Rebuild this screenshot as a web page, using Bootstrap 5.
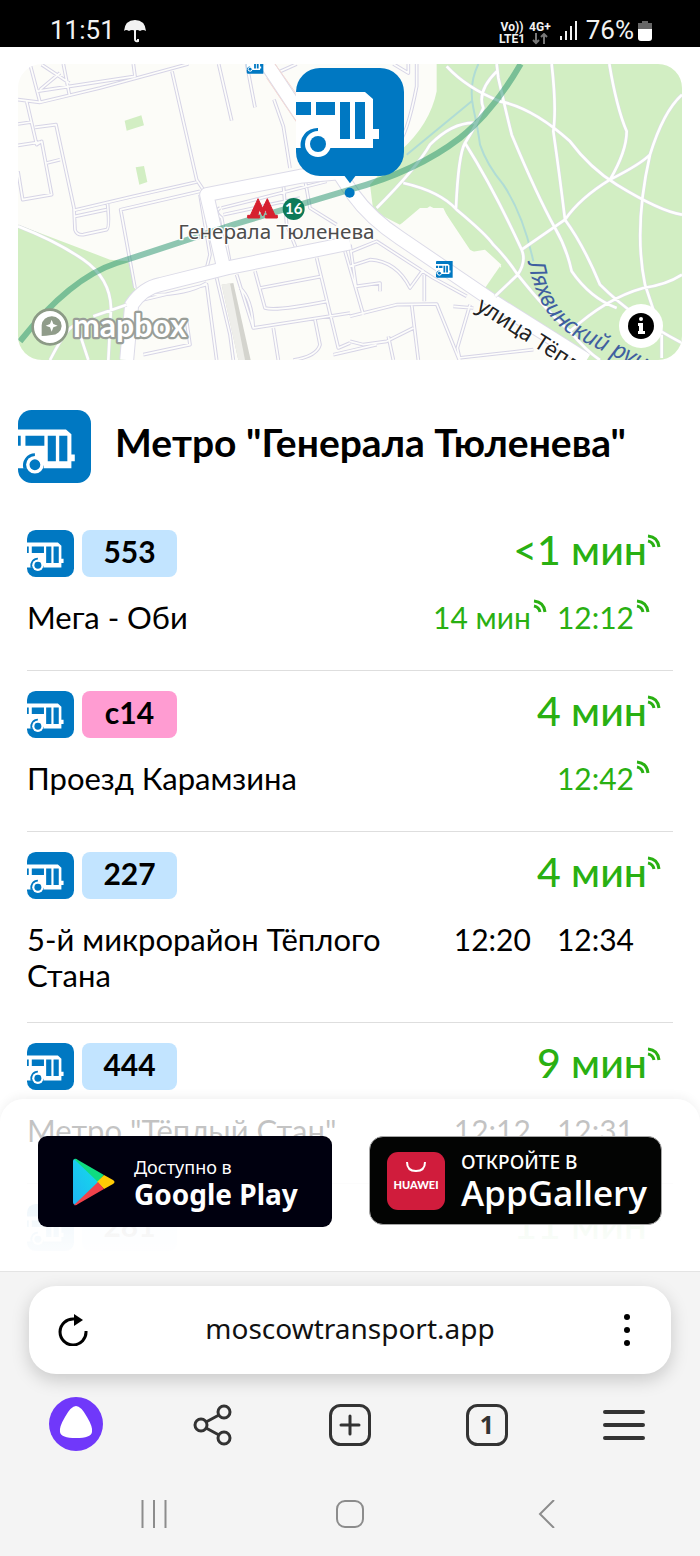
<!DOCTYPE html>
<html lang="ru">
<head>
    <meta charset="UTF-8">
    <meta name="viewport" content="width=device-width, initial-scale=1.0">
    <title>Метро "Генерала Тюленева"</title>
    <!-- Bootstrap CSS -->
    <link href="https://cdn.jsdelivr.net/npm/bootstrap@5.3.0/dist/css/bootstrap.min.css" rel="stylesheet">
    <style>
        body { font-family: "Lato", "Open Sans", sans-serif; color: #000; background: #fff; }
        svg { display: block; flex: none; }
        .phone-status { height: 48px; padding: 13px 48px 0 50px; font: 26px/34px "Roboto", sans-serif; color: #f2f2f2; }
        .net-info { font-size: 12px; line-height: 12px; font-weight: 700; }
        .page-scroll { overflow-y: auto; scrollbar-width: none; }
        .page-scroll::-webkit-scrollbar { display: none; }
        .map-box { margin: 17px 18px 0; border-radius: 24px; overflow: hidden; }
        .map-box > svg { width: 100%; height: 296px; }
        .info-btn { right: 19px; bottom: 12px; width: 44px; height: 44px; border: 0; border-radius: 50%; background: #fff; padding: 8px; }
        .stop-head { margin: 50px 18px 27px; gap: 24px; }
        .stop-head h1 { font-size: 39px; line-height: 44px; font-weight: 700; margin: 0 0 10px; }
        .route-list { margin: 0 27px; }
        .route-list .list-group-item { padding: 20px 0 29px; border-color: #dedede; color: #000; background: none; min-height: 161px; }
        .route-num { width: 95px; height: 47px; border-radius: 8px; background: #c2e4ff; font-size: 30px; line-height: 43px; font-weight: 700; text-align: center; }
        .route-num.night { background: #ff9cd2; }
        .next-time { font-size: 41px; line-height: 40px; font-weight: 500; padding-right: 12px; }
        .live { color: #29b012; }
        .route-way { margin-top: 22px; font-size: 31px; line-height: 36px; }
        .route-to { max-width: 380px; }
        .later { gap: 10px; padding-right: 23px; font-size: 30px; }
        .later span { padding-right: 16px; }
        .later .live { padding-right: 0; gap: 2px; }
        .promo { border-radius: 24px 24px 0 0; padding: 37px 38px 44px; gap: 37px; height: 172px; background: linear-gradient(rgba(255,255,255,.74), rgba(255,255,255,.78) 25%, rgba(255,255,255,.93) 55%, rgba(255,255,255,.96) 75%, #fff); box-shadow: 0 -3px 10px rgba(0,0,0,.05); }
        .store { flex: 0 1 50%; min-width: 0; border-radius: 9px; color: #fff; text-decoration: none; font-family: "Noto Sans", sans-serif; white-space: nowrap; }
        .store:hover { color: #fff; }
        .gplay { background: #00000f; padding-left: 34px; gap: 18px; }
        .gplay small { font-size: 18px; line-height: 24px; }
        .gplay b { font-size: 28px; line-height: 30px; }
        .huawei { background: #030403; border: 1px solid #a6a6a6; border-radius: 14px; padding-left: 17px; gap: 16px; margin-bottom: 2px; }
        .huawei small { font-size: 19px; line-height: 24px; font-weight: 500; }
        .huawei b { font-family: "Open Sans", sans-serif; font-size: 35px; line-height: 38px; font-weight: 600; }
        .browser-bar { background: #f4f4f4; border-top: 1px solid #e4e4e4; padding-top: 14px; }
        .address { height: 88px; margin: 0 29px 22px; padding: 0 28px; border-radius: 27px; background: #fff; box-shadow: 0 6px 18px rgba(0,0,0,.18); }
        .address input { border: 0; outline: 0; background: none; min-width: 0; text-align: center; font: 28px/36px "Noto Sans", sans-serif; color: #111; padding: 0 0 4px; }
        .bare { border: 0; background: none; padding: 0; }
        .tools { padding: 0 8px; height: 57px; }
        .sys-nav { padding: 18px 56px 0; height: 103px; }
    </style>
</head>
<body>
    <!-- Общие значки -->
    <svg width="0" height="0" class="position-absolute" aria-hidden="true">
        <symbol id="bus" viewBox="0 0 108 108">
            <rect width="108" height="108" rx="24" fill="#0078c2"/>
            <path d="M0 24H69L77 31V61H83V71H77V80H0Z" fill="#fff"/>
            <path d="M0 34H15V47H0ZM20 34H39V47H20ZM44 34H54V71H44ZM59 34H69V71H59Z" fill="#0078c2"/>
            <path d="M5 81A17 17 0 0 1 22 60V76H34V81Z" fill="#0078c2"/>
            <circle cx="22" cy="76" r="13" fill="#fff"/>
            <circle cx="22" cy="76" r="8" fill="#0078c2"/>
        </symbol>
        <symbol id="bus-list" viewBox="0 0 108 108">
            <rect width="108" height="108" rx="20" fill="#0078c2"/>
            <path d="M0 29H71L79 36V66H84V76H79V86H0Z" fill="#fff"/>
            <path d="M0 38H4V53H0ZM11 38H39V53H11ZM44 38H56V76H44ZM61 38H73V76H61Z" fill="#0078c2"/>
            <path d="M8 87A18 18 0 0 1 25 64V82H38V87Z" fill="#0078c2"/>
            <circle cx="25" cy="81" r="13" fill="#fff"/>
            <circle cx="25" cy="81" r="8" fill="#0078c2"/>
        </symbol>
        <symbol id="wave" viewBox="0 0 14 14">
            <g fill="none" stroke="#29b012" stroke-width="3">
                <path d="M1 2Q11 3 12 13"/>
                <path d="M1 7Q6 8 7 13" />
            </g>
        </symbol>
    </svg>

    <div class="d-flex flex-column vh-100">
        <div class="phone-status bg-black d-flex justify-content-between">
            <div class="d-flex gap-2">
                <span>11:51</span>
                <svg class="mt-1" width="24" height="28" viewBox="0 0 24 28"><path d="M1 14Q2 3 12 3T23 14Q20 12 17 14Q14 12 12 14Q9 12 6 14Q3 12 1 14Z" fill="#f2f2f2"/><path d="M12 13V22Q12 25 15 24V22" fill="none" stroke="#f2f2f2" stroke-width="2"/></svg>
            </div>
            <div class="d-flex">
                <div class="net-info text-center mt-1 pt-1 me-1">Vo))<br>LTE1</div>
                <div class="net-info text-center mt-1 pt-1 me-2">4G+<br><svg class="mx-auto" width="16" height="12" viewBox="0 0 16 12"><path d="M4 0V10M1 7L4 10L7 7M12 11V1M9 4L12 1L15 4" fill="none" stroke="#777" stroke-width="2"/></svg></div>
                <svg class="me-2" width="19" height="34" viewBox="0 0 19 34"><path d="M2 23V27M7 18V27M12 13V27M17 8V27" stroke="#f2f2f2" stroke-width="2"/></svg>
                <span>76%</span>
                <svg class="ms-1" width="14" height="34" viewBox="0 0 14 34"><path d="M4 8H10V10H14V18H0V10H4Z" fill="#666"/><path d="M0 16H14V25Q14 28 11 28H3Q0 28 0 25Z" fill="#fff"/></svg>
            </div>
        </div>

        <div class="flex-grow-1 position-relative overflow-hidden">
            <main class="page-scroll h-100">
                <!-- Карта -->
                <div class="map-box position-relative">
                    <svg viewBox="54 48 1992 888" preserveAspectRatio="xMidYMid slice" role="img" aria-label="Карта">
                        <defs>
                            <path id="river-line" d="M1584 642C1600 730 1640 820 1720 865S1850 925 2000 1005"/>
                            <path id="street-line" d="M1426 784L1920 1100"/>
                            <path id="lanes" d="M54 155L120 163L300 120L565 48M90 48L120 163M190 48L208 140M110 130L405 85L400 48M125 50L208 105M180 75L120 125M80 160L110 290L125 280L155 440L68 455L54 370M54 228L95 222M54 292L120 282M105 238L168 230L222 480L225 545Q230 562 250 560L320 545Q330 540 322 462M140 345L180 335M222 487L400 445L590 402M225 505L320 485M516 70L590 395L610 425M656 48L695 218M740 48L765 178M822 155L850 235L870 360M830 75L890 48M600 430L362 485L405 720M600 440L630 620L620 660M660 480Q640 490 665 510L690 645M665 480L980 400M670 500L900 450M850 410L860 530L890 605M915 395L930 480L1010 530M410 760L620 710L650 936M650 690L690 860L700 936M765 670L795 780Q830 790 980 760M780 720L965 685M710 680L760 840L1050 795M720 720Q755 750 760 840M950 630L1015 900L1050 885M820 840L835 936M945 815L960 890Q950 925 880 936M430 920L570 890L560 820M460 740Q560 740 620 705M1035 610L1090 800M1000 920L1130 890M1050 590L1068 715L1140 705V730M1050 655L1110 635Q1190 640 1230 720L1270 665M1050 612L1130 580L1300 690L1400 745M1273 680V760M1050 805L1190 770L1310 768L1378 936M1235 770L1255 936M1410 770L1372 900L1380 936M1360 775L1420 780M1050 880L1090 890L1160 880L1240 840M1165 865L1180 936M1375 930L1600 905M1180 48L1225 75V48M1250 48V115Q1220 270 1190 290"/>
                            <path id="trails" d="M1340 55Q1400 120 1500 160Q1600 180 1710 280Q1770 360 1850 410Q1980 490 2046 500M1490 48L1495 90Q1520 200 1535 260Q1610 440 1665 540Q1700 600 1715 670Q1770 750 1850 780M1490 70Q1430 130 1450 180Q1430 230 1395 285Q1375 320 1368 480M1130 480Q1250 360 1290 290Q1360 220 1430 225M1395 285Q1480 420 1565 605Q1580 640 1553 680L1485 745M1210 405Q1320 430 1370 485Q1460 560 1480 590Q1520 630 1553 680Q1640 790 1710 850Q1760 910 1800 936M1565 605L1695 515Q1740 450 1830 395Q1920 350 1950 320Q1990 190 2046 140M1655 48Q1670 180 1660 250Q1680 390 1695 515Q1750 590 1800 710Q1900 810 2046 885M1828 48Q1850 180 1880 250Q1880 310 1830 395M1950 320Q1900 540 1935 710L1975 830M1710 850Q1820 750 1930 720Q2000 710 2046 680M1985 930L1985 860M54 535Q170 580 250 635Q330 690 333 780L325 936M280 805L380 770M150 936Q230 780 240 860L265 936"/>
                            <path id="streets" d="M380 936L395 770Q430 720 480 710L680 660L1050 585M670 655L620 440L900 385L1010 375M800 48L1060 440Q1110 510 1200 570L1480 760L1760 936"/>
                        </defs>
                        <rect x="54" y="48" width="1992" height="888" fill="#fcfcf8"/>
                        <!-- Парки -->
                        <g fill="#d2eec3">
                            <path d="M54 530L330 635L385 640L410 740L380 765L385 936H54Z"/>
                            <path d="M374 218L424 202L432 232L380 248ZM407 358L432 354L442 402L418 410Z"/>
                            <path d="M1310 48H2046V936H1740L1640 850L1540 790L1450 740L1504 655L1410 605L1340 500L1290 475L1200 530L1120 490L1110 410L1200 310Q1290 230 1310 130Z"/>
                        </g>
                        <path d="M1195 535L1260 480L1330 480L1395 615L1455 605L1504 650L1455 720L1540 790L1490 760L1290 640Z" fill="#fcfcf8"/>
                        <path d="M1455 720L1500 655L1540 790Z" fill="#d2eec3"/>
                        <path d="M665 710L700 705L752 936H715Z" fill="#d4d4ce"/>
                        <path d="M665 710L690 706L735 936H715Z" fill="#eeeeea"/>
                        <!-- Дворовые проезды -->
                        <g fill="none" stroke-linejoin="round">
                            <use href="#lanes" stroke="#d6d4e6" stroke-width="11"/>
                            <use href="#lanes" stroke="#fdfdfb" stroke-width="5"/>
                        </g>
                        <!-- Улицы -->
                        <g fill="none" stroke-linejoin="round">
                            <use href="#streets" stroke="#dcdbe8" stroke-width="45"/>
                            <use href="#streets" stroke="#fff" stroke-width="39"/>
                            <path d="M825 48L905 160M800 90L888 220" stroke="#f4d9d4" stroke-width="3"/>
                        </g>
                        <!-- Ручей -->
                        <path d="M1435 48Q1405 110 1420 180T1440 290Q1460 350 1510 410Q1570 500 1600 640M1220 320L1415 160" fill="none" stroke="#b0dcd5" stroke-width="6"/>
                        <!-- Дорожки в парке -->
                        <g fill="none" stroke-linejoin="round">
                            <use href="#trails" stroke="#dcdde4" stroke-width="11"/>
                            <use href="#trails" stroke="#fff" stroke-width="8"/>
                        </g>
                        <!-- Линия метро -->
                        <path d="M60 880Q210 690 350 645Q520 590 700 530L1050 425Q1250 370 1380 270Q1480 190 1562 48" fill="none" stroke="#1f8f6a" stroke-opacity=".5" stroke-width="18"/>
                        <path d="M743 510V502H751L774 452L788 481L802 452L825 502H832V510H796V502H803L797 485L788 504L779 485L773 502H779V510Z" fill="#d6202f" stroke="#d6202f" stroke-width="3"/>
                        <circle cx="881" cy="483" r="33" fill="#0d7a59"/>
                        <text x="881" y="499" text-anchor="middle" font-family="Lato, sans-serif" font-weight="700" font-size="45" fill="#fff">16</text>
                        <text x="535" y="573" font-family="Noto Sans, sans-serif" font-size="62" fill="#4c4c4c" stroke="#fff" stroke-width="8" paint-order="stroke" stroke-linejoin="round">Генерала Тюленева</text>
                        <text font-family="Noto Sans, sans-serif" font-size="70" font-style="italic" fill="#3f5fa0"><textPath href="#river-line">Ляхвинский ручей</textPath></text>
                        <text font-family="Noto Sans, sans-serif" font-size="66" fill="#222" stroke="#fff" stroke-width="6" paint-order="stroke"><textPath href="#street-line">улица Тёплый</textPath></text>
                        <!-- Остановки -->
                        <svg x="740" y="27" width="50" height="50" viewBox="4 8 90 92"><use href="#bus" width="108" height="108"/></svg>
                        <svg x="1308" y="639" width="50" height="50" viewBox="4 8 90 92"><use href="#bus" width="108" height="108"/></svg>
                        <use href="#bus" x="888" y="60" width="324" height="324"/>
                        <path d="M1032 382H1068L1050 406Z" fill="#0078c2"/>
                        <circle cx="1049" cy="434" r="15" fill="#0078c2"/>
                        <!-- Логотип mapbox -->
                        <g stroke-linejoin="round">
                            <circle cx="150" cy="837" r="52" fill="#fff" stroke="#8c9a86" stroke-width="8"/>
                            <path d="M125 864V832A30 28 0 1 1 154 861Q138 864 125 864Z" fill="#909c8a"/>
                            <path d="M155 815L160 828L173 833L160 838L155 851L150 838L137 833L150 828Z" fill="#fff"/>
                            <text x="219" y="867" font-family="Lato, sans-serif" font-weight="700" font-size="96" fill="#fff" stroke="#999e98" stroke-width="13" paint-order="stroke">mapbox</text>
                        </g>
                    </svg>
                    <button type="button" class="info-btn position-absolute" aria-label="О карте">
                        <svg width="28" height="28" viewBox="0 0 28 28"><circle cx="14" cy="14" r="13" fill="#000"/><circle cx="14" cy="7" r="2" fill="#fff"/><path d="M11 11H16V19H18V22H11V19H12V14H11Z" fill="#fff"/></svg>
                    </button>
                </div>

                <div class="stop-head d-flex align-items-center">
                    <svg width="73" height="73"><use href="#bus-list"/></svg>
                    <h1>Метро "Генерала Тюленева"</h1>
                </div>

                <!-- Маршруты -->
                <ul class="route-list list-group list-group-flush">
                    <li class="list-group-item">
                        <div class="d-flex gap-2">
                            <svg width="47" height="47"><use href="#bus-list"/></svg>
                            <div class="route-num">553</div>
                            <div class="next-time live d-flex ms-auto">&lt;1 мин<svg width="14" height="14" class="mt-1"><use href="#wave"/></svg></div>
                        </div>
                        <div class="route-way d-flex justify-content-between">
                            <div class="route-to">Мега - Оби</div>
                            <div class="later d-flex">
                                <span class="live d-flex">14 мин<svg width="14" height="14"><use href="#wave"/></svg></span>
                                <span class="live d-flex">12:12<svg width="14" height="14"><use href="#wave"/></svg></span>
                            </div>
                        </div>
                    </li>
                    <li class="list-group-item">
                        <div class="d-flex gap-2">
                            <svg width="47" height="47"><use href="#bus-list"/></svg>
                            <div class="route-num night">с14</div>
                            <div class="next-time live d-flex ms-auto">4 мин<svg width="14" height="14" class="mt-1"><use href="#wave"/></svg></div>
                        </div>
                        <div class="route-way d-flex justify-content-between">
                            <div class="route-to">Проезд Карамзина</div>
                            <div class="later d-flex">
                                <span class="live d-flex">12:42<svg width="14" height="14"><use href="#wave"/></svg></span>
                            </div>
                        </div>
                    </li>
                    <li class="list-group-item">
                        <div class="d-flex gap-2">
                            <svg width="47" height="47"><use href="#bus-list"/></svg>
                            <div class="route-num">227</div>
                            <div class="next-time live d-flex ms-auto">4 мин<svg width="14" height="14" class="mt-1"><use href="#wave"/></svg></div>
                        </div>
                        <div class="route-way d-flex justify-content-between">
                            <div class="route-to">5-й микрорайон Тёплого Стана</div>
                            <div class="later d-flex">
                                <span>12:20</span>
                                <span>12:34</span>
                            </div>
                        </div>
                    </li>
                    <li class="list-group-item">
                        <div class="d-flex gap-2">
                            <svg width="47" height="47"><use href="#bus-list"/></svg>
                            <div class="route-num">444</div>
                            <div class="next-time live d-flex ms-auto">9 мин<svg width="14" height="14" class="mt-1"><use href="#wave"/></svg></div>
                        </div>
                        <div class="route-way d-flex justify-content-between">
                            <div class="route-to">Метро "Тёплый Стан"</div>
                            <div class="later d-flex">
                                <span>12:12</span>
                                <span>12:31</span>
                            </div>
                        </div>
                    </li>
                    <li class="list-group-item">
                        <div class="d-flex gap-2">
                            <svg width="47" height="47"><use href="#bus-list"/></svg>
                            <div class="route-num">281</div>
                            <div class="next-time live d-flex ms-auto">11 мин<svg width="14" height="14" class="mt-1"><use href="#wave"/></svg></div>
                        </div>
                    </li>
                </ul>
            </main>

            <!-- Ссылки на магазины приложений -->
            <div class="promo position-absolute bottom-0 start-0 end-0 d-flex">
                <a href="#" class="store gplay d-flex align-items-center">
                    <svg width="44" height="48" viewBox="0 0 44 48">
                        <defs>
                            <linearGradient id="play-blue" x1="0" y1="1" x2="1" y2="0"><stop offset="0" stop-color="#1fb5f5"/><stop offset="1" stop-color="#12e0e8"/></linearGradient>
                        </defs>
                        <path d="M1 3Q1 1 3 1L28 24L4 47Q1 47 1 44Z" fill="url(#play-blue)"/>
                        <path d="M2 1Q4 0 6 2L32 17L26 24Z" fill="#0fdc80"/>
                        <path d="M32 17L41 22Q44 24 41 26L32 31L25 24Z" fill="#ffcb05"/>
                        <path d="M2 47Q4 48 6 46L32 31L26 24Z" fill="#f0424b"/>
                    </svg>
                    <span class="d-flex flex-column"><small>Доступно в</small><b>Google Play</b></span>
                </a>
                <a href="#" class="store huawei d-flex align-items-center">
                    <svg width="58" height="58" viewBox="0 0 58 58">
                        <rect width="58" height="58" rx="11" fill="#d01c3c"/>
                        <path d="M20 10Q20 19 29 19T38 10" fill="none" stroke="#fff" stroke-width="2"/>
                        <text x="29" y="37" text-anchor="middle" font-family="Lato, sans-serif" font-weight="900" font-size="11" fill="#fff">HUAWEI</text>
                    </svg>
                    <span class="d-flex flex-column"><small>ОТКРОЙТЕ В</small><b>AppGallery</b></span>
                </a>
            </div>
        </div>

        <!-- Панель браузера -->
        <footer class="browser-bar">
            <div class="address d-flex align-items-center">
                <button type="button" class="bare" aria-label="Обновить"><svg width="32" height="32" viewBox="0 0 32 32"><path d="M17 5A13 13 0 1 0 29 17" fill="none" stroke="#000" stroke-width="3"/><path d="M17 0L26 6L17 12Z" fill="#000"/></svg></button>
                <input type="text" class="flex-grow-1" value="moscowtransport.app" aria-label="Адрес">
                <button type="button" class="bare" aria-label="Меню страницы"><svg width="32" height="34" viewBox="0 0 32 34"><circle cx="16" cy="4" r="3"/><circle cx="16" cy="17" r="3"/><circle cx="16" cy="30" r="3"/></svg></button>
            </div>
            <div class="tools row g-0 row-cols-5">
                <button type="button" class="bare col d-flex justify-content-center align-items-center" aria-label="Алиса"><svg width="55" height="55" viewBox="0 0 55 55"><circle cx="27" cy="27" r="27" fill="#7038fa"/><path d="M27 9Q32 9 38 20Q44 30 43 35Q42 41 27 41T11 35Q10 30 16 20Q22 9 27 9Z" fill="#fff"/></svg></button>
                <button type="button" class="bare col d-flex justify-content-center align-items-center" aria-label="Поделиться"><svg width="40" height="42" viewBox="0 0 40 42"><g fill="none" stroke="#333" stroke-width="3"><path d="M13 18L26 11M13 24L26 31"/><circle cx="8" cy="21" r="6"/><circle cx="31" cy="8" r="6"/><circle cx="31" cy="34" r="6"/></g></svg></button>
                <button type="button" class="bare col d-flex justify-content-center align-items-center" aria-label="Новая вкладка"><svg width="42" height="42" viewBox="0 0 42 42"><rect x="1.500" y="1.500" width="39" height="39" rx="10" fill="none" stroke="#333" stroke-width="3"/><path d="M21 12V30M12 21H30" stroke="#333" stroke-width="3" stroke-linecap="round"/></svg></button>
                <button type="button" class="bare col d-flex justify-content-center align-items-center" aria-label="Вкладки"><svg width="42" height="42" viewBox="0 0 42 42"><rect x="1.500" y="1.500" width="39" height="39" rx="10" fill="none" stroke="#333" stroke-width="3"/><text x="21" y="30" text-anchor="middle" font-family="Noto Sans, sans-serif" font-weight="700" font-size="25" fill="#333">1</text></svg></button>
                <button type="button" class="bare col d-flex justify-content-center align-items-center" aria-label="Меню"><svg width="44" height="32" viewBox="0 0 44 32"><path d="M3 3H41M3 16H41M3 29H41" stroke="#333" stroke-width="4" stroke-linecap="round"/></svg></button>
            </div>
            <div class="sys-nav row g-0 row-cols-3">
                <button type="button" class="bare col d-flex justify-content-center align-items-center" aria-label="Недавние"><svg width="28" height="28" viewBox="0 0 28 28"><path d="M2.500 0V28M14 0V28M25.500 0V28" stroke="#8c8c8c" stroke-width="2"/></svg></button>
                <button type="button" class="bare col d-flex justify-content-center align-items-center" aria-label="Домой"><svg width="28" height="28" viewBox="0 0 28 28"><rect x="1" y="1" width="26" height="26" rx="8" fill="none" stroke="#8c8c8c" stroke-width="2"/></svg></button>
                <button type="button" class="bare col d-flex justify-content-center align-items-center" aria-label="Назад"><svg width="28" height="28" viewBox="0 0 28 28"><path d="M22 0L8 14L22 28" fill="none" stroke="#8c8c8c" stroke-width="2"/></svg></button>
            </div>
        </footer>
    </div>

    <!-- Bootstrap JS -->
    <script src="https://cdn.jsdelivr.net/npm/bootstrap@5.3.0/dist/js/bootstrap.bundle.min.js"></script>
</body>
</html>
